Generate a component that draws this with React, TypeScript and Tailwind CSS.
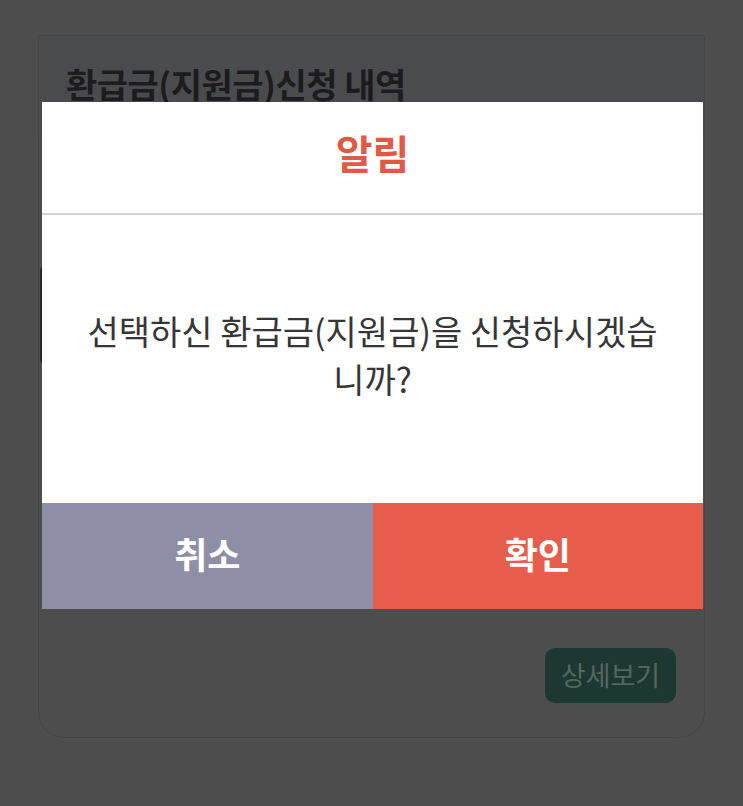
const font = "font-['Noto_Sans_CJK_KR','Noto_Sans',sans-serif]";

const App = () => {
  return (
    <div className={`relative w-full h-[806px] bg-[#4d4d4d] overflow-hidden pt-[35px] px-[38px] ${font}`}>
      {/* Page behind the dim layer */}
      <div className="h-[703px] border border-[#454545] rounded-b-[26px] flex flex-col">
        <div className="h-[95px] bg-[#4a4b4d] border-b border-[#464646] flex items-center pl-[27px]">
          <h1 className="text-[34px] font-bold text-[#1c1c1e] tracking-[-0.5px]">
            환급금(지원금)신청 내역
          </h1>
        </div>
        <div className="mt-[134px] mx-[1px] h-[100px] bg-[#25242f] rounded-[6px]"></div>
        <button className="mt-[283px] self-end mr-[28px] w-[131px] h-[55px] rounded-[10px] bg-[#1d3833] text-[27px] text-[#56655f]">
          상세보기
        </button>
      </div>

      {/* Alert dialog */}
      <div className="absolute left-[42px] top-[102px] w-[661px] bg-white">
        <div className="h-[111px] flex items-center justify-center pb-[12px]">
          <h2 className="text-[40px] font-bold text-[#e05a47]">알림</h2>
        </div>
        <div className="h-[2px] bg-[#d2d4d8]"></div>
        <div className="h-[288px] flex items-center justify-center px-[40px] pb-[8px]">
          <p className="text-center text-[34px] leading-[48px] text-[#363636]">
            선택하신 환급금(지원금)을 신청하시겠습니까?
          </p>
        </div>
        <div className="grid grid-cols-2 h-[106px]">
          <button className="bg-[#8e8ea6] text-white text-[36px] font-bold pb-[6px]">취소</button>
          <button className="bg-[#e65e4b] text-white text-[36px] font-bold pb-[6px]">확인</button>
        </div>
      </div>
    </div>
  );
};

export default App;
